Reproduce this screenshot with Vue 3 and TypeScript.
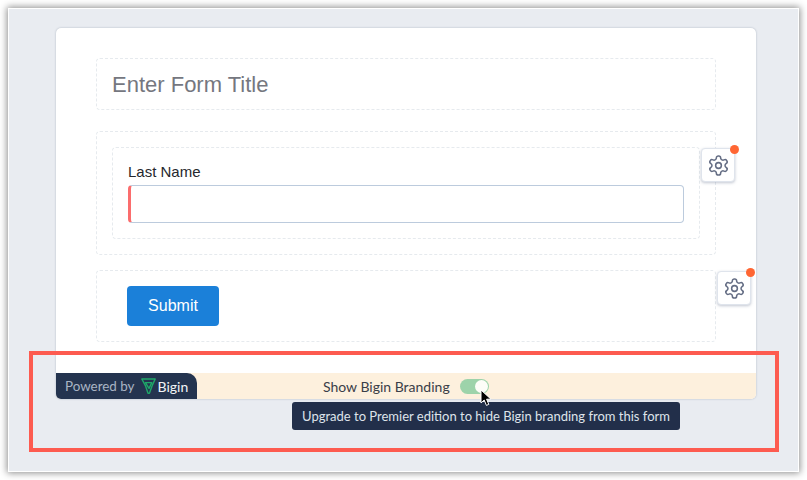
<template>
  <div class="page">
    <div class="shot">
      <div class="card">
        <div class="form">
          <div class="title-box">Enter Form Title</div>

          <div class="section field-section">
            <div class="field">
              <label class="field-label">Last Name</label>
              <div class="field-input"></div>
            </div>
            <button class="gear gear-field" type="button" aria-label="Field settings">
              <svg viewBox="0 0 24 24" width="23" height="23" fill="none" stroke="#646d84" stroke-width="1.6" stroke-linecap="round" stroke-linejoin="round">
                <path :d="gearPath" />
                <circle cx="12" cy="12" r="3" />
              </svg>
            </button>
          </div>

          <div class="section submit-section">
            <button class="submit" type="button">Submit</button>
            <button class="gear gear-submit" type="button" aria-label="Button settings">
              <svg viewBox="0 0 24 24" width="23" height="23" fill="none" stroke="#646d84" stroke-width="1.6" stroke-linecap="round" stroke-linejoin="round">
                <path :d="gearPath" />
                <circle cx="12" cy="12" r="3" />
              </svg>
            </button>
          </div>
        </div>

        <div class="footer">
          <div class="powered">
            <span class="powered-text">Powered by</span>
            <svg class="logo" viewBox="0 0 15 16" width="15" height="16" fill="none" stroke="#1fa869" stroke-width="1.4" stroke-linejoin="round">
              <path d="M.8 1h13.4l-2.6 5.6-3.2 8.6H7L4.4 7.6z" />
              <path d="M4.4 4.6h6.4L8 10.4z" />
            </svg>
            <span class="brand">Bigin</span>
          </div>
          <div class="branding">
            <span class="branding-label">Show Bigin Branding</span>
            <span class="toggle"><span class="knob"></span></span>
          </div>
        </div>
      </div>

      <div class="tooltip">Upgrade to Premier edition to hide Bigin branding from this form</div>

      <svg class="cursor" viewBox="0 0 12 18" width="12" height="18">
        <path d="M1 1v13l3.2-3 2.2 5.4 2.4-1-2.2-5.2H11z" fill="#000" stroke="#fff" stroke-width="1" stroke-linejoin="round" />
      </svg>

      <div class="annotation"></div>
    </div>
  </div>
</template>

<script setup lang="ts">
const gearPath =
  'M12.22 2h-.44a2 2 0 0 0-2 2v.18a2 2 0 0 1-1 1.73l-.43.25a2 2 0 0 1-2 0l-.15-.08a2 2 0 0 0-2.73.73l-.22.38a2 2 0 0 0 .73 2.73l.15.1a2 2 0 0 1 1 1.72v.51a2 2 0 0 1-1 1.74l-.15.09a2 2 0 0 0-.73 2.73l.22.38a2 2 0 0 0 2.73.73l.15-.08a2 2 0 0 1 2 0l.43.25a2 2 0 0 1 1 1.73V20a2 2 0 0 0 2 2h.44a2 2 0 0 0 2-2v-.18a2 2 0 0 1 1-1.73l.43-.25a2 2 0 0 1 2 0l.15.08a2 2 0 0 0 2.73-.73l.22-.39a2 2 0 0 0-.73-2.73l-.15-.08a2 2 0 0 1-1-1.74v-.5a2 2 0 0 1 1-1.74l.15-.09a2 2 0 0 0 .73-2.73l-.22-.38a2 2 0 0 0-2.73-.73l-.15.08a2 2 0 0 1-2 0l-.43-.25a2 2 0 0 1-1-1.73V4a2 2 0 0 0-2-2z'
</script>

<style>
html,
body {
  background: #fff;
}
</style>

<style scoped>
.page {
  box-sizing: border-box;
  width: 807px;
  height: 480px;
  padding: 9px 0 0 9px;
  overflow: hidden;
}

.shot {
  position: relative;
  box-sizing: border-box;
  width: 789px;
  height: 462px;
  padding: 19px 0 0 47px;
  background: #e9ecf1;
  box-shadow: 0 0 0 1px #fff, 0 0 7px 2px rgba(0, 0, 0, 0.45);
  font-family: "Liberation Sans", Arial, sans-serif;
}

.card {
  display: flex;
  flex-direction: column;
  justify-content: space-between;
  width: 700px;
  height: 371px;
  background: #fff;
  border-radius: 5px;
  box-shadow: 0 0 2px rgba(90, 105, 130, 0.45);
}

.form {
  display: flex;
  flex-direction: column;
  padding: 30px 40px 0;
}

.title-box {
  box-sizing: border-box;
  height: 52px;
  padding: 2px 15px 0;
  display: flex;
  align-items: center;
  border: 1px dashed #e6eaee;
  border-radius: 4px;
  font-size: 22px;
  color: #75777f;
}

.section {
  position: relative;
  box-sizing: border-box;
  border: 1px dashed #e6eaee;
  border-radius: 4px;
}

.field-section {
  height: 124px;
  margin-top: 21px;
  padding: 15px;
}

.field {
  box-sizing: border-box;
  height: 92px;
  padding: 15px 15px 0;
  border: 1px dashed #e6eaee;
  border-radius: 4px;
}

.field-label {
  display: block;
  font-size: 15px;
  line-height: 17px;
  color: #26282e;
}

.field-input {
  box-sizing: border-box;
  height: 38px;
  margin-top: 5px;
  background: #fff;
  border: 1px solid #bccbdd;
  border-left: 3px solid #fb6d6d;
  border-radius: 4px;
}

.submit-section {
  height: 72px;
  margin-top: 15px;
  padding: 15px 30px;
}

.submit {
  display: block;
  width: 92px;
  height: 40px;
  padding: 0;
  border: none;
  border-radius: 4px;
  background: #1b80d9;
  color: #fff;
  font: 16px "Liberation Sans", Arial, sans-serif;
}

.gear {
  position: absolute;
  width: 34px;
  height: 34px;
  display: flex;
  align-items: center;
  justify-content: center;
  padding: 0;
  background: #fff;
  border: 1px solid #dfe4ec;
  border-radius: 4px;
  box-shadow: 0 1px 3px rgba(80, 95, 125, 0.35);
}

.gear::after {
  content: "";
  position: absolute;
  top: -4px;
  right: -5px;
  width: 9px;
  height: 9px;
  border-radius: 50%;
  background: #ff6633;
}

.gear-field {
  top: 16px;
  right: -20px;
}

.gear-submit {
  top: 0;
  right: -36px;
}

.footer {
  display: flex;
  align-items: center;
  height: 26px;
  background: #fdf0dd;
  border-radius: 0 0 5px 5px;
  font-family: Lato, sans-serif;
}

.powered {
  box-sizing: border-box;
  width: 141px;
  height: 26px;
  display: flex;
  align-items: center;
  padding-left: 9px;
  background: #24344f;
  border-radius: 0 10px 0 5px;
}

.powered-text {
  font-size: 13.4px;
  color: #a9b4c4;
}

.logo {
  margin-left: 6px;
}

.brand {
  margin-left: 2px;
  font-size: 14px;
  color: #f2f4f7;
}

.branding {
  display: flex;
  align-items: center;
  margin-left: 126px;
}

.branding-label {
  font-size: 14px;
  color: #3a3e48;
}

.toggle {
  position: relative;
  width: 29px;
  height: 15px;
  margin-left: 10px;
  border-radius: 8px;
  background: #9dd3aa;
}

.knob {
  position: absolute;
  top: 1px;
  right: 1px;
  width: 13px;
  height: 13px;
  border-radius: 50%;
  background: #fdfdf8;
}

.tooltip {
  position: absolute;
  left: 283px;
  top: 393px;
  box-sizing: border-box;
  width: 388px;
  height: 28px;
  display: flex;
  align-items: center;
  justify-content: center;
  background: #222f4a;
  border-radius: 3px;
  font-family: Lato, sans-serif;
  font-size: 13px;
  color: #dfe4ea;
  white-space: nowrap;
}

.cursor {
  position: absolute;
  left: 471px;
  top: 380px;
}

.annotation {
  position: absolute;
  left: 20px;
  top: 342px;
  box-sizing: border-box;
  width: 750px;
  height: 101px;
  border: 4px solid #fd5b50;
}
</style>
